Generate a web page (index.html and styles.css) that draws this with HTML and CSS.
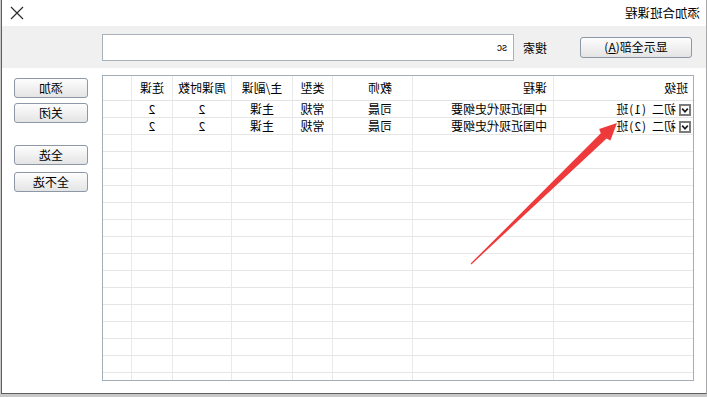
FILE: index.html
```html
<!DOCTYPE html>
<html lang="zh-CN">
<head>
<meta charset="utf-8">
<title>添加合班课程</title>
<link rel="stylesheet" href="styles.css">
</head>
<body>
<div class="screen">
  <div class="dialog">
    <div class="titlebar">
      <span class="title">添加合班课程</span>
      <svg class="close" width="16" height="16" viewBox="0 0 16 16"><path d="M2 2 L14 14 M14 2 L2 14" stroke="#2b2b2b" stroke-width="1.2" fill="none"/></svg>
    </div>
    <div class="toolbar">
      <button class="btn btn-wide">显示全部(<u>A</u>)</button>
      <span class="label">搜索</span>
      <div class="search">sc</div>
    </div>
    <div class="main">
      <div class="grid-wrap">
        <table class="grid">
          <colgroup>
            <col class="c1"><col class="c2"><col class="c3"><col class="c4"><col class="c5"><col class="c6"><col class="c7"><col class="c8">
          </colgroup>
          <thead>
            <tr><th class="left">班级</th><th class="left">课程</th><th class="teacher">教师</th><th>类型</th><th>主/副课</th><th>周课时数</th><th>连课</th><th class="fill"></th></tr>
          </thead>
          <tbody>
            <tr><td class="cls"><span class="cb"><svg width="12" height="12" viewBox="0 0 12 12"><rect x="1" y="1" width="10" height="10" fill="#fff" stroke="#7b7b7b" stroke-width="2"/><path d="M3.2 4.6 L6 7.8 L8.8 4.6" stroke="#1a1a1a" stroke-width="1.6" fill="none"/></svg></span>初二<span class="no">(1)</span>班</td><td class="left">中国近现代史纲要</td><td class="teacher">司晨</td><td>常规</td><td>主课</td><td>2</td><td>2</td><td class="fill"></td></tr>
            <tr><td class="cls"><span class="cb"><svg width="12" height="12" viewBox="0 0 12 12"><rect x="1" y="1" width="10" height="10" fill="#fff" stroke="#7b7b7b" stroke-width="2"/><path d="M3.2 4.6 L6 7.8 L8.8 4.6" stroke="#1a1a1a" stroke-width="1.6" fill="none"/></svg></span>初二<span class="no">(2)</span>班</td><td class="left">中国近现代史纲要</td><td class="teacher">司晨</td><td>常规</td><td>主课</td><td>2</td><td>2</td><td class="fill"></td></tr>
            <tr><td></td><td></td><td></td><td></td><td></td><td></td><td></td><td class="fill"></td></tr>
            <tr><td></td><td></td><td></td><td></td><td></td><td></td><td></td><td class="fill"></td></tr>
            <tr><td></td><td></td><td></td><td></td><td></td><td></td><td></td><td class="fill"></td></tr>
            <tr><td></td><td></td><td></td><td></td><td></td><td></td><td></td><td class="fill"></td></tr>
            <tr><td></td><td></td><td></td><td></td><td></td><td></td><td></td><td class="fill"></td></tr>
            <tr><td></td><td></td><td></td><td></td><td></td><td></td><td></td><td class="fill"></td></tr>
            <tr><td></td><td></td><td></td><td></td><td></td><td></td><td></td><td class="fill"></td></tr>
            <tr><td></td><td></td><td></td><td></td><td></td><td></td><td></td><td class="fill"></td></tr>
            <tr><td></td><td></td><td></td><td></td><td></td><td></td><td></td><td class="fill"></td></tr>
            <tr><td></td><td></td><td></td><td></td><td></td><td></td><td></td><td class="fill"></td></tr>
            <tr><td></td><td></td><td></td><td></td><td></td><td></td><td></td><td class="fill"></td></tr>
            <tr><td></td><td></td><td></td><td></td><td></td><td></td><td></td><td class="fill"></td></tr>
            <tr><td></td><td></td><td></td><td></td><td></td><td></td><td></td><td class="fill"></td></tr>
            <tr><td></td><td></td><td></td><td></td><td></td><td></td><td></td><td class="fill"></td></tr>
            <tr><td></td><td></td><td></td><td></td><td></td><td></td><td></td><td class="fill"></td></tr>
          </tbody>
        </table>
      </div>
      <div class="side">
        <button class="btn btn-side">添加</button>
        <button class="btn btn-side">关闭</button>
        <button class="btn btn-side gap">全选</button>
        <button class="btn btn-side">全不选</button>
      </div>
    </div>
  </div>
</div>
<svg class="arrow" width="707" height="397" viewBox="0 0 707 397">
  <polygon points="470.6,263.6 600.8,133.2 599.2,129.0 617,123 610.4,140.6 606.6,138.6 471.4,264.4" fill="#ee3a3a"/>
</svg>
</body>
</html>
```

FILE: styles.css
```css
html, body {
  margin: 0;
  padding: 0;
}
body {
  width: 707px;
  height: 397px;
  overflow: hidden;
  background: #c8c8c8;
  font-family: "Noto Sans CJK SC", "Liberation Sans", sans-serif;
  font-size: 12px;
  color: #000;
  position: relative;
}
.screen {
  width: 707px;
  height: 397px;
  transform: scaleX(-1);
  transform-origin: center;
}
.dialog {
  width: 704px;
  height: 393px;
  background: #fff;
  border-left: 1px solid #a9a9a9;
  border-right: 1px solid #5f5f5f;
  border-bottom: 1px solid #5f5f5f;
  display: flex;
  flex-direction: column;
}
.titlebar {
  height: 26px;
  display: flex;
  align-items: center;
  justify-content: space-between;
  padding: 0 7px 0 6px;
}
.title {
  line-height: 14px;
  font-size: 12.5px;
}
.close {
  display: block;
  margin-bottom: 1px;
}
.toolbar {
  height: 42px;
  background: #f0f0f0;
  display: flex;
  align-items: center;
  padding-left: 14px;
}
.btn {
  font-family: inherit;
  font-size: 12px;
  color: #000;
  border: 1px solid #8c98a6;
  border-radius: 3px;
  background: linear-gradient(#fdfdfd, #e4e4e4);
  padding: 0;
  line-height: 16px;
  box-sizing: border-box;
}
.btn-wide {
  width: 112px;
  height: 21px;
}
.btn u {
  text-decoration: underline;
}
.label {
  margin-left: 33px;
  width: 24px;
}
.search {
  margin-left: 9px;
  width: 412px;
  height: 27px;
  box-sizing: border-box;
  border: 1px solid #a7b1bc;
  background: #fff;
  font-family: "Liberation Sans", sans-serif;
  font-size: 10px;
  line-height: 25px;
  padding-left: 6px;
}
.main {
  flex: 1;
  display: flex;
  padding: 7px 12px 0 12px;
  gap: 14px;
}
.grid-wrap {
  width: 592px;
  height: 306px;
  box-sizing: border-box;
  border: 1px solid #a3adb8;
  overflow: hidden;
  background: #fff;
}
.grid {
  table-layout: fixed;
  border-collapse: separate;
  border-spacing: 0;
  width: 590px;
}
.c1 { width: 140px; }
.c2 { width: 141px; }
.c3 { width: 80px; }
.c4 { width: 40px; }
.c5 { width: 61px; }
.c6 { width: 59px; }
.c7 { width: 41px; }
.c8 { width: 28px; }
.grid th {
  font-weight: normal;
  height: 24px;
  padding: 0;
  text-align: center;
  border-right: 1px solid #e9e9e9;
  border-bottom: 1px solid #e3e3e3;
  line-height: 14px;
  white-space: nowrap;
}
.grid td {
  height: 16px;
  padding: 0;
  text-align: center;
  border-right: 1px solid #e9e9e9;
  border-bottom: 1px solid #e6e6e6;
  line-height: 16px;
  white-space: nowrap;
  overflow: hidden;
}
.grid th.left, .grid td.left {
  text-align: left;
  padding-left: 6px;
}
.grid th.left:first-child {
  padding-left: 5px;
}
.grid th.teacher, .grid td.teacher {
  text-align: left;
  padding-left: 20px;
}
.grid .fill {
  border-right: none;
}
.grid td.cls {
  text-align: left;
  padding-left: 2px;
}
.no {
  margin-left: 6px;
  letter-spacing: 1px;
}
.cb {
  display: inline-block;
  width: 12px;
  height: 12px;
  vertical-align: -2px;
  margin-right: 3px;
}
.cb svg {
  display: block;
}
.side {
  display: flex;
  flex-direction: column;
  padding-top: 3px;
}
.btn-side {
  width: 74px;
  height: 20px;
  margin-bottom: 5px;
}
.btn-side.gap {
  margin-top: 17px;
  margin-bottom: 7px;
}
.arrow {
  position: absolute;
  left: 0;
  top: 0;
  pointer-events: none;
}
```
